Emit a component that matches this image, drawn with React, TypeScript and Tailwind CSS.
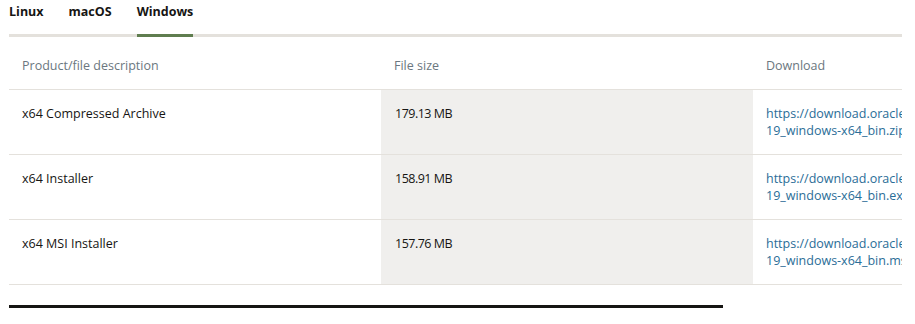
import { ReactNode } from 'react'

const rows = [
  { name: 'x64 Compressed Archive', size: '179.13 MB', file: 'zip' },
  { name: 'x64 Installer', size: '158.91 MB', file: 'exe' },
  { name: 'x64 MSI Installer', size: '157.76 MB', file: 'msi' },
]

const tabs = ['Linux', 'macOS', 'Windows']

export default function App() {
  return (
    <div className="h-[324px] w-[915px] overflow-hidden bg-white px-[9px] font-['Open_Sans',sans-serif] text-[12.5px] text-[#161513]">
      <div className="w-[893px]">
        <div className="flex border-b-[3px] border-[#e4e1dc]">
          {tabs.map((tab) => (
            <Tab key={tab} active={tab === 'Windows'}>
              {tab}
            </Tab>
          ))}
        </div>
        <div className="overflow-hidden">
          <div className="grid w-[1116px] grid-cols-[372px_372px_372px]">
            <HeadCell>Product/file description</HeadCell>
            <HeadCell>File size</HeadCell>
            <HeadCell>Download</HeadCell>
            {rows.map((row) => (
              <Row key={row.name} {...row} />
            ))}
          </div>
        </div>
      </div>
      <div className="mt-[20px] h-[3px] w-[714px] bg-[#161513]" />
    </div>
  )
}

const Tab = ({ active, children }: { active?: boolean; children: ReactNode }) => {
  return (
    <div className="mr-[25px] -mb-[3px] flex flex-col">
      <span className="pt-[4px] pb-[14px] text-[12.5px] font-bold leading-[16px]">{children}</span>
      <div className={active ? 'h-[3px] bg-[#5f7d4f]' : 'h-[3px]'} />
    </div>
  )
}

const HeadCell = ({ children }: { children: ReactNode }) => {
  return (
    <div className="h-[53px] border-b border-[#e4e1dc] px-[13px] pt-[20px] leading-[17px] text-[#6b7780]">
      {children}
    </div>
  )
}

const Row = ({ name, size, file }: { name: string; size: string; file: string }) => {
  return (
    <>
      <div className="h-[65px] border-b border-[#e4e1dc] px-[13px] pt-[15px] leading-[17px]">{name}</div>
      <div className="h-[65px] border-b border-[#e4e1dc] bg-[#f0efed] px-[14px] pt-[15px] leading-[17px] tracking-[-0.5px]">
        {size}
      </div>
      <div className="h-[65px] border-b border-[#e4e1dc] px-[13px] pt-[15px] leading-[17px]">
        <a className="text-[#2a6d97]" href="#">
          https://download.oracle.com/java/19/latest/jdk-
          <br />
          19_windows-x64_bin.{file}
        </a>
      </div>
    </>
  )
}
